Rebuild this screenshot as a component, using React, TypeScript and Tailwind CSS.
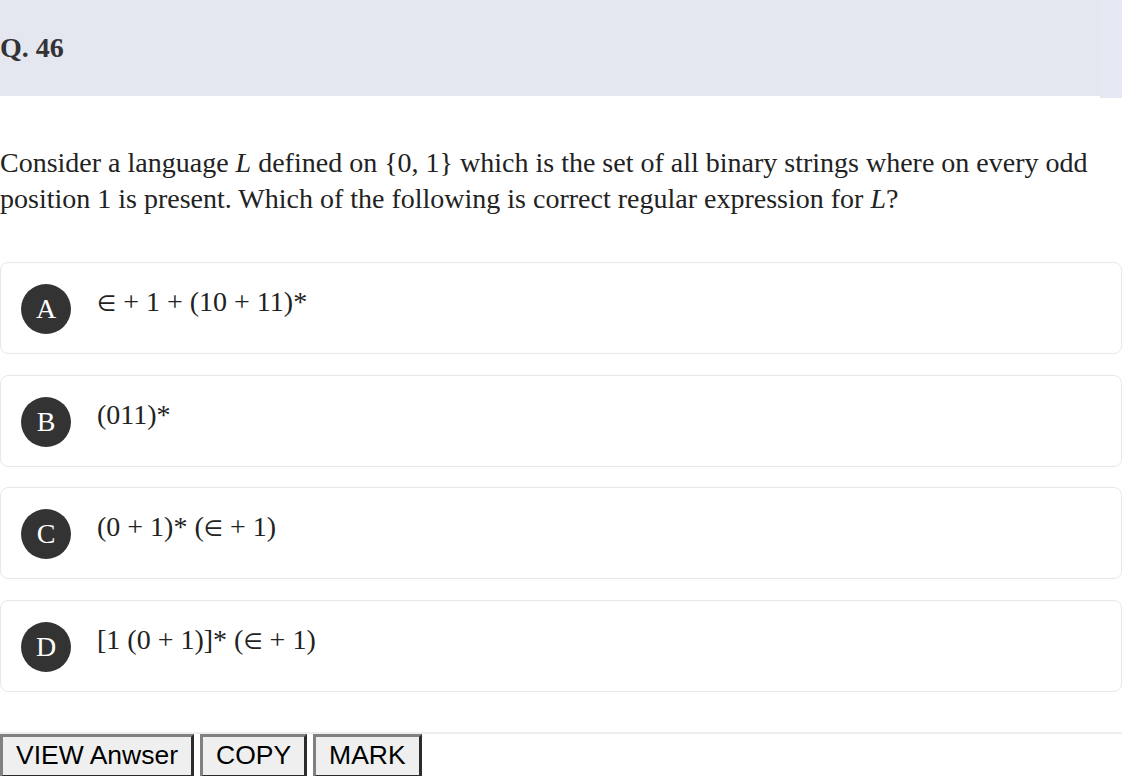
const options = [
  { id: "A", text: ["∈", " + 1 + (10 + 11)*"] },
  { id: "B", text: ["", "(011)*"] },
  { id: "C", text: ["", "(0 + 1)* (", "∈", " + 1)"] },
  { id: "D", text: ["", "[1 (0 + 1)]* (", "∈", " + 1)"] },
]

function Elem() {
  return <span className="font-['DejaVu_Sans',sans-serif] text-[22px]">∈</span>
}

export default function App() {
  return (
    <div className="w-[1122px] h-[776px] overflow-hidden bg-white text-[#222] font-['Liberation_Serif',serif]">
      <div className="flex">
        <div className="flex h-[96px] w-[1100px] items-center bg-[#e4e6f0]">
          <h2 className="text-[28px] font-bold text-[#333] leading-none">Q. 46</h2>
        </div>
        <div className="h-[98px] w-[22px] bg-[#e6e8f4]" />
      </div>

      <p className="mt-[47px] text-[28px] leading-[36px] text-[#222]">
        Consider a language <i>L</i> defined on {"{0, 1}"} which is the set of all binary strings where on every odd
        position 1 is present. Which of the following is correct regular expression for <i>L</i>?
      </p>

      <div className="mt-[45px] flex flex-col gap-[20.5px]">
        {options.map((opt) => (
          <div key={opt.id} className="flex h-[92px] items-start gap-[26px] rounded-lg border border-[#e8e8e8] px-[20px] pt-[21px]">
            <div className="flex h-[50px] w-[50px] shrink-0 items-center justify-center rounded-full bg-[#333] text-[28px] text-white">
              {opt.id}
            </div>
            <div className="text-[28px] leading-[36px] text-[#222]">
              {opt.text.map((t, i) => (t === "∈" ? <Elem key={i} /> : <span key={i}>{t}</span>))}
            </div>
          </div>
        ))}
      </div>

      <div className="mt-[40px] border-t-2 border-[#eeeeee] flex gap-[6px] font-['Liberation_Sans',sans-serif]">
        <button className="h-[44px] border-[3px] border-[#808080] bg-[#efefef] px-[13px] text-[26.5px] leading-none text-black" style={{ borderStyle: "outset" }}>
          VIEW Anwser
        </button>
        <button className="h-[44px] border-[3px] border-[#808080] bg-[#efefef] px-[13px] text-[26.5px] leading-none text-black" style={{ borderStyle: "outset" }}>
          COPY
        </button>
        <button className="h-[44px] border-[3px] border-[#808080] bg-[#efefef] px-[13px] text-[26.5px] leading-none text-black" style={{ borderStyle: "outset" }}>
          MARK
        </button>
      </div>
    </div>
  )
}
